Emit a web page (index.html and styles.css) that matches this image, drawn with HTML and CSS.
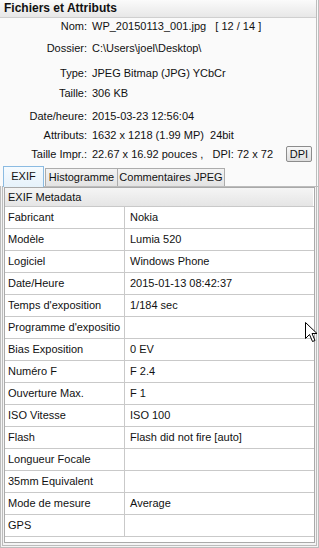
FILE: index.html
```html
<!DOCTYPE html>
<html>
<head>
<meta charset="utf-8">
<link rel="stylesheet" href="styles.css">
</head>
<body>
<div class="app">
  <div class="top">
    <div class="title">Fichiers et Attributs</div>
    <div class="info">
      <div class="row r-nom"><span class="lbl">Nom:</span><span class="val">WP_20150113_001.jpg &nbsp; [ 12 / 14 ]</span></div>
      <div class="row r-dos"><span class="lbl">Dossier:</span><span class="val">C:\Users\joel\Desktop\</span></div>
      <div class="row r-type"><span class="lbl">Type:</span><span class="val">JPEG Bitmap (JPG) YCbCr</span></div>
      <div class="row r-tai"><span class="lbl">Taille:</span><span class="val">306 KB</span></div>
      <div class="row r-date"><span class="lbl">Date/heure:</span><span class="val">2015-03-23 12:56:04</span></div>
      <div class="row r-att"><span class="lbl">Attributs:</span><span class="val">1632 x 1218 (1.99 MP) &nbsp;24bit</span></div>
      <div class="row r-imp"><span class="lbl">Taille Impr.:</span><span class="val">22.67 x 16.92 pouces , &nbsp; DPI: 72 x 72</span><span class="btn">DPI</span></div>
    </div>
    <div class="tabs">
      <div class="tab active">EXIF</div>
      <div class="tab t-hist">Histogramme</div>
      <div class="tab t-com">Commentaires JPEG</div>
    </div>
  </div>
  <div class="tabpanel">
    <div class="grid">
      <div class="ghead">EXIF Metadata</div>
      <div class="grow"><div class="c1">Fabricant</div><div class="c2">Nokia</div></div>
      <div class="grow"><div class="c1">Modèle</div><div class="c2">Lumia 520</div></div>
      <div class="grow"><div class="c1">Logiciel</div><div class="c2">Windows Phone</div></div>
      <div class="grow"><div class="c1">Date/Heure</div><div class="c2">2015-01-13 08:42:37</div></div>
      <div class="grow"><div class="c1">Temps d'exposition</div><div class="c2">1/184 sec</div></div>
      <div class="grow"><div class="c1">Programme d'expositio</div><div class="c2"></div></div>
      <div class="grow"><div class="c1">Bias Exposition</div><div class="c2">0 EV</div></div>
      <div class="grow"><div class="c1">Numéro F</div><div class="c2">F 2.4</div></div>
      <div class="grow"><div class="c1">Ouverture Max.</div><div class="c2">F 1</div></div>
      <div class="grow"><div class="c1">ISO Vitesse</div><div class="c2">ISO 100</div></div>
      <div class="grow"><div class="c1">Flash</div><div class="c2">Flash did not fire [auto]</div></div>
      <div class="grow"><div class="c1">Longueur Focale</div><div class="c2"></div></div>
      <div class="grow"><div class="c1">35mm Equivalent</div><div class="c2"></div></div>
      <div class="grow"><div class="c1">Mode de mesure</div><div class="c2">Average</div></div>
      <div class="grow"><div class="c1">GPS</div><div class="c2"></div></div>
    </div>
  </div>
  <svg class="cursor" width="13" height="21" viewBox="0 0 13 21">
    <path d="M0.5 0.5 L0.5 16.5 L4.5 12.5 L7.5 19.5 L10 18.5 L7 11.5 L12 11.5 Z" fill="#fff" stroke="#000" stroke-width="1" stroke-linejoin="miter"/>
  </svg>
</div>
</body>
</html>
```

FILE: styles.css
```css
* { box-sizing: border-box; }
html, body { margin: 0; padding: 0; }
body {
  font-family: "Liberation Sans", Arial, sans-serif;
  font-size: 11px;
  color: #111;
  background: #fafafa;
}
.app {
  position: relative;
  width: 319px;
  height: 548px;
  display: flex;
  flex-direction: column;
  overflow: hidden;
}
.top {
  border-right: 3px double #bdbdbd;
  background: #fafafa;
}
.title {
  height: 18px;
  line-height: 17px;
  padding-left: 4px;
  font-weight: bold;
  font-size: 12px;
  background: linear-gradient(#fbfbfb, #e7e7e7);
  border-bottom: 1px solid #cfcfcf;
}
.info { display: flex; flex-direction: column; }
.row {
  display: flex;
  align-items: center;
  height: 14px;
  line-height: 14px;
  white-space: nowrap;
}
.lbl {
  width: 92px;
  text-align: right;
  padding-right: 5px;
  flex: none;
}
.val { flex: none; }
.r-nom { margin-top: 1px; }
.r-dos { margin-top: 8px; }
.r-type { margin-top: 11px; }
.r-tai { margin-top: 6px; }
.r-date { margin-top: 9px; }
.r-att { margin-top: 5px; }
.r-imp { margin-top: 5px; }
.btn {
  margin-left: auto;
  margin-right: 4px;
  width: 26px;
  height: 16px;
  line-height: 14px;
  text-align: center;
  border: 1px solid #8c8c8c;
  border-radius: 2px;
  background: linear-gradient(#f7f7f7, #dedede);
}
.tabs {
  display: flex;
  align-items: flex-end;
  margin-top: 5px;
  padding-left: 3px;
  height: 20px;
}
.tab {
  height: 18px;
  line-height: 17px;
  text-align: center;
  white-space: nowrap;
  border: 1px solid #acacac;
  border-bottom: none;
  background: linear-gradient(#f3f3f3, #e3e3e3);
}
.tab.active {
  line-height: 19px;
  width: 41px;
  margin-right: 1px;
  border-color: #8bbbe2;
  background: linear-gradient(#f6fbff, #e6f2fb);
  position: relative;
  z-index: 1;
  margin-bottom: -1px;
  height: 21px;
}
.t-hist { width: 73px; }
.t-com { width: 108px; margin-left: -1px; }
.tabpanel {
  flex: 1;
  border: 3px double #bcbcbc;
  border-top: 1px solid #bcbcbc;
  padding: 0 1px 2px 1px;
  background: #f4f4f4;
  display: flex;
}
.grid {
  flex: 1;
  border: 1px solid #a9a9a9;
  background: #fff;
  display: flex;
  flex-direction: column;
}
.ghead {
  height: 18px;
  line-height: 18px;
  padding-left: 3px;
  background: linear-gradient(#f5f5f5, #e5e5e5);
  border-right: 1px solid #fff;
}
.grow {
  display: flex;
  height: 22px;
  border-top: 1px solid #c9c9c9;
  line-height: 21px;
}
.c1 {
  width: 120px;
  flex: none;
  padding-left: 3px;
  border-right: 1px solid #c9c9c9;
  overflow: hidden;
  white-space: nowrap;
}
.c2 {
  flex: 1;
  padding-left: 5px;
  white-space: nowrap;
}
.grow:last-child { border-bottom: 1px solid #c9c9c9; height: 23px; }
.cursor {
  position: absolute;
  left: 305px;
  top: 322px;
}
```
